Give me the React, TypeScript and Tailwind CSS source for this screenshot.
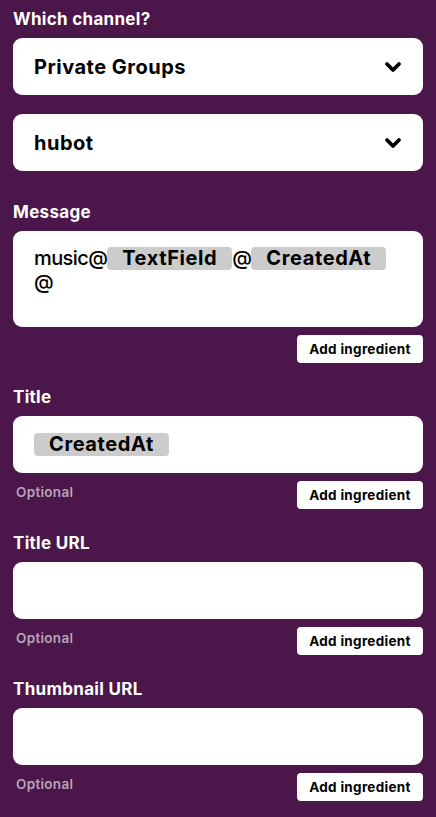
import React from "react";

const font = { fontFamily: "Inter, 'Noto Sans', sans-serif" };

function Chevron() {
  return (
    <svg width="18" height="12" viewBox="0 0 18 12" className="shrink-0">
      <path d="M3 3 L9 9 L15 3" fill="none" stroke="#000" strokeWidth="3.8" strokeLinecap="round" strokeLinejoin="round" />
    </svg>
  );
}

function Select({ label }: { label: string }) {
  return (
    <div className="flex h-[57px] items-center justify-between rounded-[9px] bg-white pl-[21px] pr-[21px]">
      <span className="text-[20px] font-bold tracking-[0.5px] text-black">{label}</span>
      <Chevron />
    </div>
  );
}

function Chip({ children }: { children: React.ReactNode }) {
  return (
    <span className="inline-block rounded-[4px] bg-[#cccccc] px-[15px] align-baseline text-[20px] font-bold leading-[23px] tracking-[0.6px] text-black">
      {children}
    </span>
  );
}

function AddButton() {
  return (
    <button className="h-[28px] w-[126px] rounded-[4px] bg-white text-[13.5px] font-bold tracking-[0.3px] text-black">
      Add ingredient
    </button>
  );
}

function Label({ children, className = "" }: { children: React.ReactNode; className?: string }) {
  return (
    <div className={`text-[17px] font-bold leading-[20px] tracking-[0.3px] text-white ${className}`}>{children}</div>
  );
}

function Optional() {
  return <span className="pl-[3px] pt-[1px] text-[13.5px] font-semibold tracking-[0.3px] text-[#b9a3b8]">Optional</span>;
}

function Field({ label, chip }: { label: string; chip?: string }) {
  return (
    <div className="flex flex-col">
      <Label className="mb-[9px]">{label}</Label>
      <div className="flex h-[57px] items-center rounded-[9px] bg-white pl-[21px]">
        {chip ? <Chip>{chip}</Chip> : null}
      </div>
      <div className="mt-[8px] flex items-start justify-between">
        <Optional />
        <AddButton />
      </div>
    </div>
  );
}

export default function App() {
  return (
    <div style={font} className="min-h-[817px] w-[436px] bg-[#4b164a] px-[13px] pt-[9px]">
      <Label className="mb-[9px]">Which channel?</Label>
      <div className="flex flex-col gap-[19px]">
        <Select label="Private Groups" />
        <Select label="hubot" />
      </div>

      <Label className="mb-[9px] mt-[31px]">Message</Label>
      <div className="h-[96px] rounded-[9px] bg-white pl-[21px] pr-[16px] pt-[15px] text-[20px] font-medium leading-[24px] tracking-[-0.6px] text-black">
        music@<Chip>TextField</Chip>@<Chip>CreatedAt</Chip>
        <br />@
      </div>
      <div className="mt-[8px] flex justify-end">
        <AddButton />
      </div>

      <div className="mt-[24px] flex flex-col gap-[24px]">
        <Field label="Title" chip="CreatedAt" />
        <Field label="Title URL" />
        <Field label="Thumbnail URL" />
      </div>
    </div>
  );
}
